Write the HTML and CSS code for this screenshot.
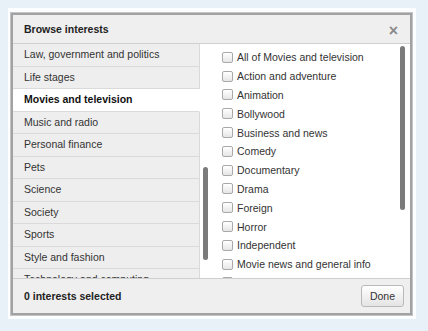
FILE: index.html
```html
<!DOCTYPE html>
<html lang="en">
  <head>
    <meta charset="UTF-8" />
    <meta name="viewport" content="width=device-width, initial-scale=1.0" />
    <title>Browse interests</title>
    <link rel="stylesheet" href="styles.css">
  </head>
  <body>
    <div class="card">
      <div class="dialog">
        <div class="dialog-header">
          <h3>Browse interests</h3>
          <span class="close">&times;</span>
        </div>

        <div class="dialog-body">
          <div class="categories">
            <ul class="category-list">
              <li>Law, government and politics</li>
              <li>Life stages</li>
              <li class="active">Movies and television</li>
              <li>Music and radio</li>
              <li>Personal finance</li>
              <li>Pets</li>
              <li>Science</li>
              <li>Society</li>
              <li>Sports</li>
              <li>Style and fashion</li>
              <li>Technology and computing</li>
            </ul>
            <div class="thumb thumb-left"></div>
          </div>

          <div class="options">
            <ul class="option-list">
              <li><span class="box"></span>All of Movies and television</li>
              <li><span class="box"></span>Action and adventure</li>
              <li><span class="box"></span>Animation</li>
              <li><span class="box"></span>Bollywood</li>
              <li><span class="box"></span>Business and news</li>
              <li><span class="box"></span>Comedy</li>
              <li><span class="box"></span>Documentary</li>
              <li><span class="box"></span>Drama</li>
              <li><span class="box"></span>Foreign</li>
              <li><span class="box"></span>Horror</li>
              <li><span class="box"></span>Independent</li>
              <li><span class="box"></span>Movie news and general info</li>
              <li><span class="box"></span>Musicals</li>
            </ul>
            <div class="thumb thumb-right"></div>
          </div>
        </div>

        <div class="dialog-footer">
          <span class="count">0 interests selected</span>
          <button class="done">Done</button>
        </div>
      </div>
    </div>
  </body>
</html>
```

FILE: styles.css
```css
/* Page */
body {
  margin: 0;
  padding: 8px 12px 12px 8px;
  background-color: #e9f1f8;
  font-family: "Liberation Sans", Arial, sans-serif;
  font-size: 10.5px;
  color: #333;
}

.card {
  background-color: #fdfeff;
  padding: 5px 4px 4px 3px;
}

/* Dialog */
.dialog {
  border: 2px solid #a2a2a2;
  box-shadow: 0 0 0 1px #c4c4c4;
  background-color: #fff;
  display: flex;
  flex-direction: column;
  height: 298px;
}

.dialog-header {
  display: flex;
  align-items: center;
  justify-content: space-between;
  height: 28px;
  padding: 0 11px;
  background-color: #efefef;
  border-bottom: 1px solid #cfcfcf;
}

.dialog-header h3 {
  margin: 0;
  font-size: 10.5px;
  font-weight: bold;
  color: #222;
}

.close {
  font-size: 16px;
  font-weight: bold;
  color: #8a8a8a;
  margin-top: 3px;
  margin-right: 1px;
}

.dialog-body {
  flex: 1;
  display: grid;
  grid-template-columns: 198px 1fr;
  overflow: hidden;
}

/* Left column */
.categories {
  position: relative;
  overflow: hidden;
}

.category-list {
  list-style: none;
  margin: 0;
  padding: 0;
  width: 187px;
}

.category-list li {
  height: 21.5px;
  line-height: 21.5px;
  padding-left: 11px;
  background-color: #eeeeee;
  border-bottom: 1px solid #dadada;
  border-right: 1px solid #dadada;
  white-space: nowrap;
}

.category-list li.active {
  background-color: #fff;
  border-right-color: #fff;
  font-weight: bold;
  color: #111;
}

/* Right column */
.options {
  position: relative;
  overflow: hidden;
}

.option-list {
  list-style: none;
  margin: 0;
  padding: 4px 0 0 11px;
}

.option-list li {
  display: flex;
  align-items: center;
  gap: 4px;
  height: 18.8px;
  white-space: nowrap;
}

.box {
  width: 9px;
  height: 9px;
  border: 1px solid #a9a9a9;
  border-radius: 2px;
  background: linear-gradient(#ffffff, #e6e6e6);
}

/* Scroll thumbs */
.thumb {
  position: absolute;
  width: 5px;
  border-radius: 3px;
  background-color: #7b7b7b;
}

.thumb-left {
  left: 190px;
  top: 123px;
  height: 93px;
}

.thumb-right {
  right: 5px;
  top: 2px;
  height: 164px;
}

/* Footer */
.dialog-footer {
  display: flex;
  align-items: center;
  justify-content: space-between;
  height: 34px;
  padding: 0 6px 0 11px;
  background-color: #efefef;
  border-top: 1px solid #cfcfcf;
}

.count {
  font-weight: bold;
  color: #222;
}

.done {
  font-family: "Liberation Sans", Arial, sans-serif;
  font-size: 10.5px;
  color: #333;
  height: 22px;
  padding: 0 8px;
  border: 1px solid #b9b9b9;
  border-radius: 3px;
  background: linear-gradient(#ffffff, #e4e4e4);
}
```
